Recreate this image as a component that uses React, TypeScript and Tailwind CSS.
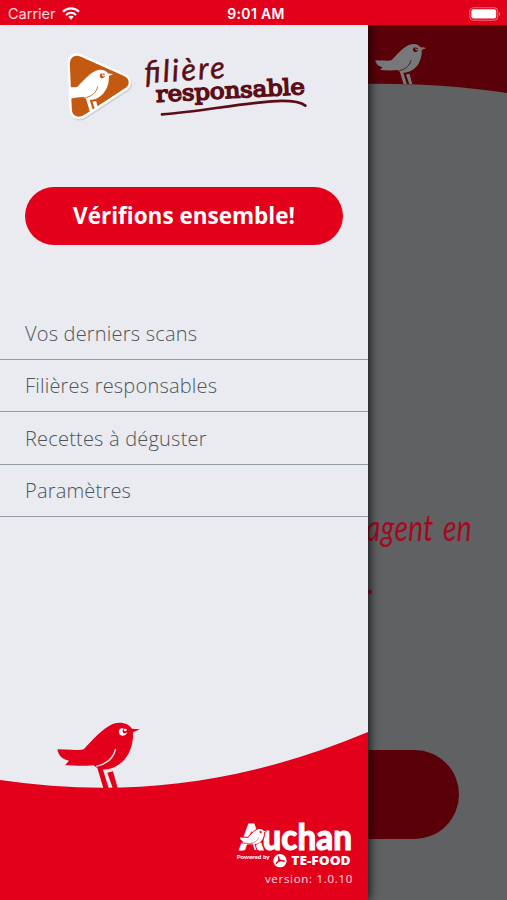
const menuItems = [
  "Vos derniers scans",
  "Filières responsables",
  "Recettes à déguster",
  "Paramètres",
];

// Robin shape shared by every logo, drawn on a 300x240 grid
function Bird({ gap, eye }: { gap: string; eye: string }) {
  return (
    <>
      <path
        fill="currentColor"
        d="M52 118 L96 119 C112 121 123 121 132 117 C157 90 188 55 218 42 C242 33 266 40 276 56 L300 58 L279 67 C281 102 268 137 246 156 C233 168 216 176 201 178 L189 179 L206 234 L190 234 L172 174 L160 166 C130 169 100 167 75 166 L87 152 C67 148 56 139 52 118 Z"
      />
      <path fill="currentColor" d="M202 188 L219 184 L233 234 L218 234 Z" />
      <path
        d="M227 117 C220 145 201 162 169 169"
        fill="none"
        stroke={gap}
        strokeWidth="4"
      />
      <path
        fill={eye}
        d="M244 55 C235 57 234 71 242 76 C250 80 260 75 262 66 C256 72 249 70 248 65 C247 60 250 57 254 56 Z"
      />
      <circle cx="256" cy="60" r="4" fill={eye} />
    </>
  );
}

function StatusBar() {
  return (
    <div className="grid h-[25px] shrink-0 grid-cols-3 items-center bg-[#e2001a] pl-2 pr-[6px] pt-[2px] text-white">
      <div className="flex items-center gap-[6px] text-[14.5px] text-white/85">
        <span>Carrier</span>
        <svg className="h-[13px] w-[18px]" viewBox="0 0 18 13">
          <g fill="none" stroke="white" strokeWidth="2.2">
            <path d="M1 4.8 C5.5 .3 12.5 .3 17 4.8" />
            <path d="M4 8 C7 5.2 11 5.2 14 8" />
          </g>
          <path fill="white" d="M6.3 9.7 Q9 7.6 11.7 9.7 L9 12.7 Z" />
        </svg>
      </div>
      <span className="pl-[3px] text-center text-[14px] font-semibold tracking-[0.3px]">
        9:01 AM
      </span>
      <svg className="h-[14px] w-8 justify-self-end" viewBox="0 0 32 14">
        <rect x=".8" y=".7" width="28" height="12.5" rx="3.5" fill="none" stroke="white" strokeOpacity=".45" />
        <rect x="2.4" y="2.3" width="24.8" height="9.3" rx="2" fill="white" />
        <path d="M30.2 4.8 Q32.2 7 30.2 9.2 Z" fill="white" fillOpacity=".5" />
      </svg>
    </div>
  );
}

function BrandLogo() {
  return (
    <div className="flex h-[80px] pl-[55px]">
      <svg className="h-[85px] w-[85px] shrink-0" viewBox="0 0 255 255">
        <defs>
          <clipPath id="badge">
            <path d="M41 59 C41 30 62 22 84 34 L207 89 C230 99 229 122 212 133 L94 210 C72 226 48 218 47 193 Z" />
          </clipPath>
        </defs>
        <path
          d="M41 59 C41 30 62 22 84 34 L207 89 C230 99 229 122 212 133 L94 210 C72 226 48 218 47 193 Z"
          fill="#c7cacf"
          stroke="#cfd2d7"
          strokeWidth="8"
          transform="translate(3 4)"
        />
        <path
          d="M41 59 C41 30 62 22 84 34 L207 89 C230 99 229 122 212 133 L94 210 C72 226 48 218 47 193 Z"
          fill="#c45a12"
          stroke="#fff"
          strokeWidth="7"
        />
        <g clipPath="url(#badge)">
          <path d="M30 133 L75 132 L66 157 L30 165 Z" fill="#fff" />
          <g transform="translate(-17 50) scale(.64)" className="text-white">
            <Bird gap="#c45a12" eye="#c45a12" />
          </g>
        </g>
      </svg>
      <svg className="-ml-[5px] h-[80px] w-[180px] shrink-0" viewBox="0 0 540 240" fill="#5c0d16">
        <text
          x="30"
          y="115"
          transform="rotate(-4 30 115)"
          fontSize="92"
          fontStyle="italic"
          stroke="#5c0d16"
          strokeWidth="1.5"
          strokeLinejoin="round"
          textLength="242"
          lengthAdjust="spacing"
          className="font-['Lato',sans-serif]"
        >
          filière
        </text>
        <text
          x="64"
          y="171"
          transform="rotate(-3.1 64 171)"
          fontSize="66"
          stroke="#5c0d16"
          strokeWidth="4.5"
          textLength="447"
          lengthAdjust="spacingAndGlyphs"
          className="font-['DejaVu_Serif',serif]"
        >
          responsable
        </text>
        <path
          d="M81 208 C190 201 300 177 410 169 C455 166 493 168 511 182"
          fill="none"
          stroke="#5c0d16"
          strokeWidth="8"
          strokeLinecap="round"
        />
      </svg>
    </div>
  );
}

function DrawerFooter() {
  return (
    <div className="grid">
      <svg className="col-start-1 row-start-1 h-[190px] w-[368px]" viewBox="0 710 368 190">
        <path d="M0 780 C120 798 240 786 368 732 V900 H0 Z" fill="#e2001a" />
        <g transform="translate(40 710) scale(.33333)" className="text-[#e2001a]">
          <Bird gap="#e9ebf0" eye="#fff" />
        </g>
      </svg>
      <div className="col-start-1 row-start-1 flex flex-col items-end self-end pb-[13px] pr-[15px] text-white">
        <svg className="h-[48px] w-[117px] overflow-visible" viewBox="35 36 351 144" fill="#fff">
          <text
            x="46"
            y="125"
            fontSize="110"
            fontWeight="900"
            stroke="#fff"
            strokeWidth="3"
            textLength="337"
            lengthAdjust="spacingAndGlyphs"
            className="font-['Lato',sans-serif]"
          >
            Auchan
          </text>
          <g transform="translate(30 51) scale(.32)">
            <path
              d="M52 118 L132 117 C157 90 188 55 218 42 C242 33 266 40 276 56 L300 58 L279 67 C281 102 268 137 246 156 L201 178 L160 166 L75 166 Z"
              fill="none"
              stroke="#e2001a"
              strokeWidth="16"
            />
            <g className="text-white">
              <Bird gap="#e2001a" eye="#e2001a" />
            </g>
          </g>
          <text x="37" y="153" fontSize="17" fontWeight="900" textLength="99" lengthAdjust="spacingAndGlyphs" className="font-['Lato',sans-serif]">
            Powered by
          </text>
          <circle cx="167" cy="158" r="20" />
          <g fill="none" stroke="#e2001a" strokeWidth="4.5">
            <path d="M165 157 L162 145 M165 157 L155 167 M165 157 L181 160" />
            <circle cx="165" cy="157" r="2" />
          </g>
          <text x="201" y="170" fontSize="37" fontWeight="800" textLength="178" lengthAdjust="spacingAndGlyphs" className="font-['Open_Sans',sans-serif]">
            TE-FOOD
          </text>
        </svg>
        <span className="mt-[3px] font-['Open_Sans',sans-serif] text-[11.5px] leading-[16px] tracking-[0.7px] text-white/85">
          version: 1.0.10
        </span>
      </div>
    </div>
  );
}

function Drawer() {
  return (
    <aside className="absolute inset-y-0 left-0 flex w-[368px] flex-col bg-[#e9ebf0] pt-[20px] shadow-[3px_0_8px_rgba(0,0,0,0.65)]">
      <BrandLogo />
      <button className="mx-[25px] mt-[61.5px] h-[58.5px] w-[318px] shrink-0 rounded-full bg-[#e2001a] pt-px font-['Open_Sans',sans-serif] text-[22.5px] font-bold text-white">
        Vérifions ensemble!
      </button>
      <nav className="mt-[62px]">
        {menuItems.map((item) => (
          <a
            key={item}
            className="flex h-[52.5px] items-center border-b border-[#949ea3] pl-[25px] pt-[2px] font-['Open_Sans',sans-serif] text-[20px] font-light tracking-[0.2px] text-[#4f5459]"
          >
            {item}
          </a>
        ))}
      </nav>
      <div className="mt-auto">
        <DrawerFooter />
      </div>
    </aside>
  );
}

// Screen behind the drawer, already dimmed
function HomeScreen() {
  return (
    <div className="flex h-full flex-col items-end bg-[#5f6163]">
      <svg className="h-[85px] w-[147px] shrink-0" viewBox="360 25 147 85">
        <path d="M360 25 H507 V93 C460 86 410 83 360 84 Z" fill="#5a0009" />
        <g transform="translate(364.7 36.2) scale(.2043)" className="text-[#777879]">
          <Bird gap="#5a0009" eye="#5a0009" />
        </g>
        <path d="M421.5 47 L426 48 L421.5 49.8 Z" fill="#9a6547" />
      </svg>
      <div className="mt-[389px] flex w-[141px] flex-col text-[#a30a20]">
        <span className="h-[57px] origin-left scale-x-[0.78] whitespace-nowrap font-['Lato',sans-serif] text-[36px] italic leading-[56px] tracking-[0.5px] [word-spacing:3px]">
          agent en
        </span>
        <span className="ml-[1px] font-['Lato',sans-serif] text-[34px] italic leading-[50px]">.</span>
      </div>
      <div className="mr-[48px] mt-auto mb-[61px] h-[89px] w-[412px] rounded-full bg-[#5a0009]" />
    </div>
  );
}

export default function App() {
  return (
    <div className="flex h-[900px] w-[507px] flex-col overflow-hidden font-['Inter','Liberation_Sans',sans-serif]">
      <StatusBar />
      <main className="relative min-h-0 flex-1 overflow-hidden">
        <HomeScreen />
        <Drawer />
      </main>
    </div>
  );
}
